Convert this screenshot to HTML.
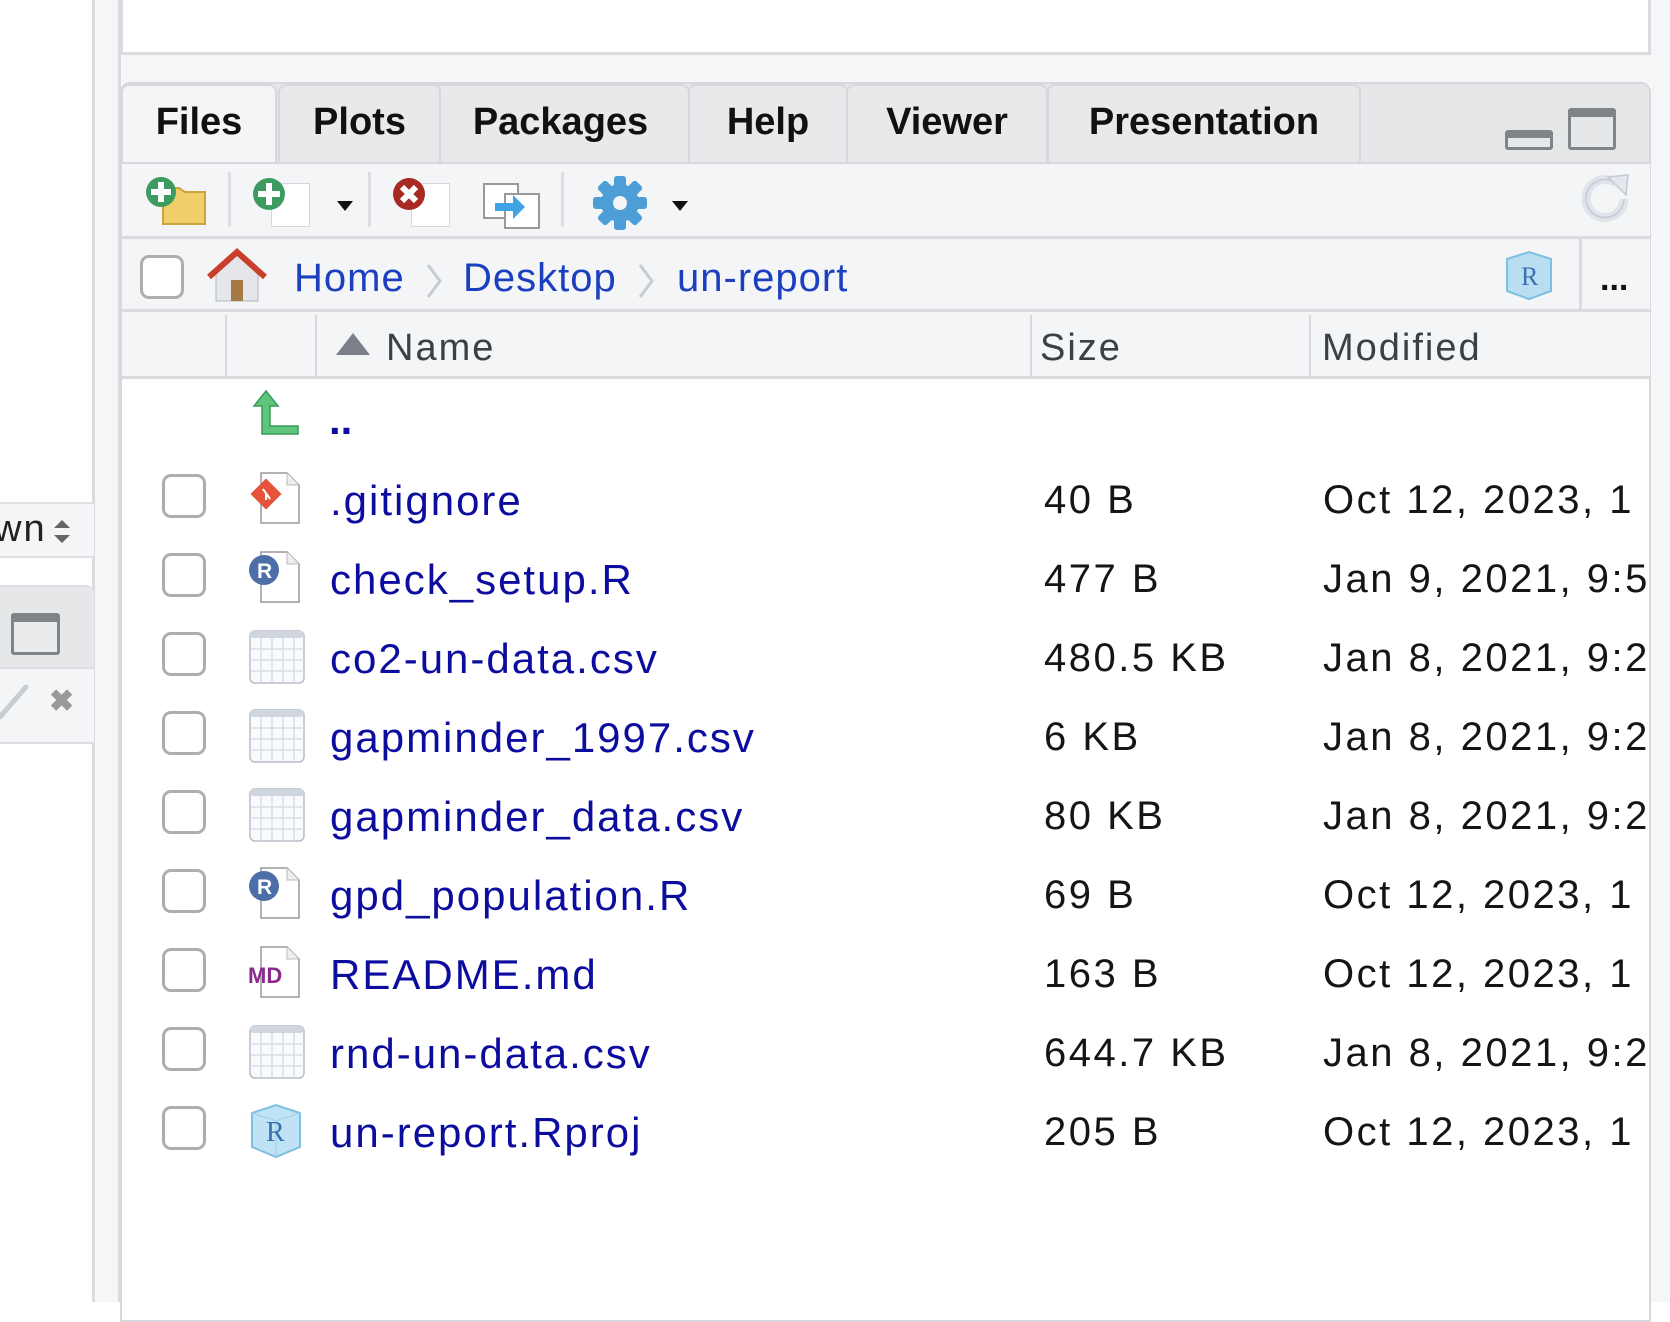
<!DOCTYPE html>
<html><head><meta charset="utf-8"><style>
*{margin:0;padding:0;box-sizing:border-box}
body{width:1670px;height:1302px;background:#fff;position:relative;overflow:hidden;font-family:"Liberation Sans",sans-serif}
.a{position:absolute}
.cb{position:absolute;width:44px;height:44px;border:3px solid #aeaeae;border-radius:9px;background:#fff}
.tab{position:absolute;top:84px;height:78px;background:#e8e9eb;border:2px solid #d6d8db;border-bottom:none;border-radius:8px 8px 0 0;font-weight:bold;font-size:38px;color:#111;text-align:center;line-height:72px}
.row{position:absolute;left:122px;width:1528px;height:79px}
.row .n{position:absolute;left:208px;top:4px;line-height:79px;font-size:42px;color:#0c0c9e;white-space:nowrap;letter-spacing:2px}
.row .s{position:absolute;left:922px;top:4px;line-height:79px;font-size:40px;color:#151515;white-space:nowrap;letter-spacing:2.5px}
.row .m{position:absolute;left:1201px;top:4px;line-height:79px;font-size:40px;color:#151515;white-space:nowrap;letter-spacing:2.5px}
.row .cb{left:40px;top:17px}
.row svg{position:absolute;left:126px;top:12px}
.bc{font-size:40px;color:#1c3fc0;position:absolute;top:256px;letter-spacing:1px}
.hd{font-size:38px;color:#3a4146;position:absolute;top:327px;letter-spacing:2px}
</style></head><body>
<div class="a" style="left:0;top:0;width:93px;height:1302px;background:#fff"></div>
<div class="a" style="left:92px;top:0;width:3px;height:1302px;background:#d9dbde"></div>
<div class="a" style="left:95px;top:0;width:25px;height:1302px;background:#f4f6f8"></div>
<div class="a" style="left:118px;top:0;width:3px;height:1302px;background:#d9dbde"></div>
<div class="a" style="left:0;top:502px;width:94px;height:56px;background:#f3f5f7;border-top:2px solid #dfe1e4;border-bottom:2px solid #dfe1e4"></div>
<div class="a" style="left:-6px;top:508px;font-size:38px;color:#222;letter-spacing:2px">wn</div>
<svg class="a" style="left:52px;top:518px" width="20" height="28"><path d="M2 10 L10 2 L18 10Z M2 17 L10 25 L18 17Z" fill="#666"/></svg>
<div class="a" style="left:0;top:585px;width:94px;height:82px;background:#e6e7e9;border-radius:0 8px 0 0;border-top:2px solid #dcdee1"></div>
<div class="a" style="left:11px;top:613px;width:49px;height:42px;border:3px solid #7f8487;border-top:9px solid #7f8487;border-radius:3px;background:#e9eaec"></div>
<div class="a" style="left:0;top:667px;width:94px;height:77px;background:#f3f5f7;border-top:2px solid #dcdee1;border-bottom:2px solid #dcdee1"></div>
<svg class="a" style="left:0;top:675px" width="40" height="50"><path d="M0 42 L26 12" stroke="#c9ccd0" stroke-width="5" stroke-linecap="round"/></svg>
<div class="a" style="left:49px;top:684px;font-size:30px;color:#999;font-weight:bold">✖</div>

<div class="a" style="left:120px;top:0;width:1531px;height:55px;background:#fff;border:3px solid #d9dbde;border-top:none"></div>
<div class="a" style="left:121px;top:55px;width:1549px;height:30px;background:#f4f6f8"></div>
<div class="a" style="left:1651px;top:0;width:19px;height:1302px;background:#f4f6f8"></div>

<div class="a" style="left:120px;top:82px;width:1531px;height:1240px;background:#fff;border:2px solid #d6d8db;border-radius:10px 10px 0 0;overflow:hidden">
 <div class="a" style="left:0;top:0;width:1531px;height:80px;background:#e6e7e9"></div>
</div>
<div class="tab" style="left:431px;width:259px">Packages</div>
<div class="tab" style="left:278px;width:163px">Plots</div>
<div class="tab" style="left:688px;width:160px">Help</div>
<div class="tab" style="left:846px;width:202px">Viewer</div>
<div class="tab" style="left:1047px;width:314px">Presentation</div>
<div class="tab" style="left:121px;width:156px;background:#f3f5f7;height:80px">Files</div>
<div class="a" style="left:1505px;top:130px;width:48px;height:20px;border:3px solid #7f8487;border-top:8px solid #7f8487;border-radius:3px"></div>
<div class="a" style="left:1568px;top:108px;width:48px;height:42px;border:3px solid #7f8487;border-top:9px solid #7f8487;border-radius:3px"></div>

<div class="a" style="left:122px;top:162px;width:1528px;height:77px;background:#f3f5f7;border-top:2px solid #d6d8db;border-bottom:3px solid #d9dbde"></div>
<svg class="a" style="left:143px;top:176px" width="70" height="52">
 <path d="M20 12 h16 l6 4 h20 v32 h-42z" fill="#f0cf6a" stroke="#c9a33b" stroke-width="2"/>
 <circle cx="18" cy="16" r="15" fill="#3e9b5f"/><path d="M18 6 v20 M8 16 h20" stroke="#fff" stroke-width="6"/>
</svg>
<div class="a" style="left:228px;top:172px;width:3px;height:55px;background:#dcdee1"></div>
<div class="a" style="left:271px;top:183px;width:39px;height:44px;background:#fff;border:1px solid #d5d7da"></div>
<svg class="a" style="left:250px;top:175px" width="40" height="40"><circle cx="19" cy="19" r="16" fill="#3e9b5f"/><path d="M19 8 v22 M8 19 h22" stroke="#fff" stroke-width="6"/></svg>
<svg class="a" style="left:336px;top:200px" width="20" height="12"><path d="M1 1 h16 l-8 10z" fill="#111"/></svg>
<div class="a" style="left:368px;top:172px;width:3px;height:55px;background:#dcdee1"></div>
<div class="a" style="left:411px;top:183px;width:39px;height:44px;background:#fff;border:1px solid #d5d7da"></div>
<svg class="a" style="left:390px;top:175px" width="40" height="40"><circle cx="19" cy="19" r="16" fill="#a82a22"/><path d="M12 12 l14 14 M26 12 l-14 14" stroke="#fff" stroke-width="6"/></svg>
<svg class="a" style="left:483px;top:182px" width="58" height="48"><rect x="1" y="2" width="34" height="34" fill="#fff" stroke="#999" stroke-width="2"/><rect x="22" y="12" width="34" height="34" fill="#fff" stroke="#999" stroke-width="2"/><path d="M12 21 h18 v-8 l12 12 l-12 12 v-8 h-18z" fill="#3fa3e6"/></svg>
<div class="a" style="left:561px;top:172px;width:3px;height:55px;background:#dcdee1"></div>
<svg class="a" style="left:590px;top:175px" width="60" height="56" viewBox="-30 -28 60 56">
 <g fill="#4d9ed6"><circle r="19"/>
 <g id="t"><rect x="-6" y="-27" width="12" height="12" rx="3"/></g>
 <use href="#t" transform="rotate(45)"/><use href="#t" transform="rotate(90)"/><use href="#t" transform="rotate(135)"/><use href="#t" transform="rotate(180)"/><use href="#t" transform="rotate(225)"/><use href="#t" transform="rotate(270)"/><use href="#t" transform="rotate(315)"/></g>
 <circle r="7" fill="#f3f5f7"/></svg>
<svg class="a" style="left:671px;top:200px" width="20" height="12"><path d="M1 1 h16 l-8 10z" fill="#111"/></svg>
<svg class="a" style="left:1578px;top:171px" width="56" height="56"><path d="M46 28 a19 19 0 1 1 -8 -16" fill="none" stroke="#dfe3ea" stroke-width="9"/><path d="M46 28 a19 19 0 1 1 -8 -16" fill="none" stroke="#c4cad3" stroke-width="1.5"/><path d="M30 6 l20 -2 l-2 20z" fill="#e3e7ee" stroke="#c4cad3" stroke-width="1.5"/></svg>

<div class="a" style="left:122px;top:239px;width:1528px;height:73px;background:#f3f5f7;border-bottom:3px solid #d9dbde"></div>
<div class="cb" style="left:140px;top:255px;background:#fff"></div>
<svg class="a" style="left:206px;top:247px" width="62" height="56"><path d="M10 26 v28 h42 v-28 l-21 -20z" fill="#e4e6e9" stroke="#b4b8bc" stroke-width="1"/><path d="M3 30 L31 5 L59 30" fill="none" stroke="#c8402c" stroke-width="6"/><rect x="25" y="33" width="12" height="21" fill="#a77848"/></svg>
<div class="bc" style="left:294px">Home</div>
<svg class="a" style="left:425px;top:262px" width="18" height="38"><path d="M3 3 L15 19 L3 35" fill="none" stroke="#c8cbd0" stroke-width="3"/></svg>
<div class="bc" style="left:463px">Desktop</div>
<svg class="a" style="left:637px;top:262px" width="18" height="38"><path d="M3 3 L15 19 L3 35" fill="none" stroke="#c8cbd0" stroke-width="3"/></svg>
<div class="bc" style="left:677px">un-report</div>
<svg class="a" style="left:1503px;top:249px" width="52" height="52"><path d="M4 10 L26 3 L48 10 V42 L26 50 L4 42Z" fill="#b9def2" stroke="#7fc0e2" stroke-width="2"/><text x="18" y="36" font-family="Liberation Serif,serif" font-size="26" fill="#3a6fb0">R</text></svg>
<div class="a" style="left:1579px;top:239px;width:3px;height:73px;background:#d9dbde"></div>
<div class="a" style="left:1600px;top:260px;font-size:34px;color:#111;font-weight:bold">...</div>

<div class="a" style="left:122px;top:312px;width:1528px;height:67px;background:#f3f5f7;border-bottom:3px solid #d9dbde"></div>
<div class="a" style="left:225px;top:315px;width:2px;height:62px;background:#d6d8db"></div>
<div class="a" style="left:315px;top:315px;width:2px;height:62px;background:#d6d8db"></div>
<div class="a" style="left:1030px;top:315px;width:2px;height:62px;background:#d6d8db"></div>
<div class="a" style="left:1309px;top:315px;width:2px;height:62px;background:#d6d8db"></div>
<svg class="a" style="left:336px;top:333px" width="34" height="22"><path d="M0 22 L17 0 L34 22z" fill="#7b8088"/></svg>
<div class="hd" style="left:386px">Name</div>
<div class="hd" style="left:1040px">Size</div>
<div class="hd" style="left:1322px">Modified</div>

<svg class="a" style="left:248px;top:388px" width="54" height="50"><path d="M6 18 L18 3 L30 18 H22 V38 H50 V46 H14 V18z" fill="#5fc57c" stroke="#3a9a57" stroke-width="1.5"/></svg>
<div class="a" style="left:329px;top:396px;font-size:42px;color:#0c0c9e;font-weight:bold">..</div>

<div class="a" style="left:121px;top:457px;width:1528px;height:760px;overflow:hidden">
<div class="row" style="left:1px;top:0">
 <div class="cb"></div>
 <svg width="60" height="58"><path d="M13 4 h26 l12 12 v38 h-38z" fill="#fff" stroke="#999" stroke-width="1.5"/><path d="M39 4 v12 h12" fill="#eee" stroke="#bbb"/><rect x="7" y="14" width="22" height="22" transform="rotate(45 18 25)" fill="#e4533a"/><path d="M15 20 l7 10 M18 25 v6" stroke="#fff" stroke-width="2"/></svg>
 <div class="n">.gitignore</div><div class="s">40 B</div><div class="m">Oct 12, 2023, 1</div></div>
<div class="row" style="left:1px;top:79px">
 <div class="cb"></div>
 <svg width="60" height="58"><path d="M13 4 h26 l12 12 v38 h-38z" fill="#fff" stroke="#999" stroke-width="1.5"/><path d="M39 4 v12 h12" fill="#eee" stroke="#bbb"/><circle cx="16" cy="22" r="15" fill="#4d6fa8"/><text x="9" y="30" font-size="21" font-weight="bold" fill="#fff" font-family="Liberation Sans">R</text></svg>
 <div class="n">check_setup.R</div><div class="s">477 B</div><div class="m">Jan 9, 2021, 9:5</div></div>
<div class="row" style="left:1px;top:158px">
 <div class="cb"></div>
 <svg width="60" height="58"><rect x="2" y="4" width="54" height="52" rx="5" fill="#f8fafd" stroke="#b8bec6" stroke-width="1.5"/><rect x="2" y="4" width="54" height="7" rx="4" fill="#cfd6de"/><path d="M13 11v45M24 11v45M35 11v45M46 11v45M2 22h54M2 33h54M2 44h54" stroke="#d6dce4" stroke-width="1.5"/></svg>
 <div class="n">co2-un-data.csv</div><div class="s">480.5 KB</div><div class="m">Jan 8, 2021, 9:2</div></div>
<div class="row" style="left:1px;top:237px">
 <div class="cb"></div>
 <svg width="60" height="58"><rect x="2" y="4" width="54" height="52" rx="5" fill="#f8fafd" stroke="#b8bec6" stroke-width="1.5"/><rect x="2" y="4" width="54" height="7" rx="4" fill="#cfd6de"/><path d="M13 11v45M24 11v45M35 11v45M46 11v45M2 22h54M2 33h54M2 44h54" stroke="#d6dce4" stroke-width="1.5"/></svg>
 <div class="n">gapminder_1997.csv</div><div class="s">6 KB</div><div class="m">Jan 8, 2021, 9:2</div></div>
<div class="row" style="left:1px;top:316px">
 <div class="cb"></div>
 <svg width="60" height="58"><rect x="2" y="4" width="54" height="52" rx="5" fill="#f8fafd" stroke="#b8bec6" stroke-width="1.5"/><rect x="2" y="4" width="54" height="7" rx="4" fill="#cfd6de"/><path d="M13 11v45M24 11v45M35 11v45M46 11v45M2 22h54M2 33h54M2 44h54" stroke="#d6dce4" stroke-width="1.5"/></svg>
 <div class="n">gapminder_data.csv</div><div class="s">80 KB</div><div class="m">Jan 8, 2021, 9:2</div></div>
<div class="row" style="left:1px;top:395px">
 <div class="cb"></div>
 <svg width="60" height="58"><path d="M13 4 h26 l12 12 v38 h-38z" fill="#fff" stroke="#999" stroke-width="1.5"/><path d="M39 4 v12 h12" fill="#eee" stroke="#bbb"/><circle cx="16" cy="22" r="15" fill="#4d6fa8"/><text x="9" y="30" font-size="21" font-weight="bold" fill="#fff" font-family="Liberation Sans">R</text></svg>
 <div class="n">gpd_population.R</div><div class="s">69 B</div><div class="m">Oct 12, 2023, 1</div></div>
<div class="row" style="left:1px;top:474px">
 <div class="cb"></div>
 <svg width="60" height="58"><path d="M13 4 h26 l12 12 v38 h-38z" fill="#fff" stroke="#999" stroke-width="1.5"/><path d="M39 4 v12 h12" fill="#eee" stroke="#bbb"/><text x="0" y="40" font-size="22" font-weight="bold" fill="#8a2a8e" font-family="Liberation Sans">MD</text></svg>
 <div class="n">README.md</div><div class="s">163 B</div><div class="m">Oct 12, 2023, 1</div></div>
<div class="row" style="left:1px;top:553px">
 <div class="cb"></div>
 <svg width="60" height="58"><rect x="2" y="4" width="54" height="52" rx="5" fill="#f8fafd" stroke="#b8bec6" stroke-width="1.5"/><rect x="2" y="4" width="54" height="7" rx="4" fill="#cfd6de"/><path d="M13 11v45M24 11v45M35 11v45M46 11v45M2 22h54M2 33h54M2 44h54" stroke="#d6dce4" stroke-width="1.5"/></svg>
 <div class="n">rnd-un-data.csv</div><div class="s">644.7 KB</div><div class="m">Jan 8, 2021, 9:2</div></div>
<div class="row" style="left:1px;top:632px">
 <div class="cb"></div>
 <svg width="60" height="58"><path d="M4 12 L28 4 L52 12 V46 L28 56 L4 46Z" fill="#bfe2f5" stroke="#7fc0e2" stroke-width="2"/><path d="M4 12 L28 20 L52 12 M28 20 V56" stroke="#9bd0ea" fill="none"/><text x="18" y="40" font-family="Liberation Serif,serif" font-size="28" fill="#3a6fb0">R</text></svg>
 <div class="n">un-report.Rproj</div><div class="s">205 B</div><div class="m">Oct 12, 2023, 1</div></div>
</div>
</body></html>
